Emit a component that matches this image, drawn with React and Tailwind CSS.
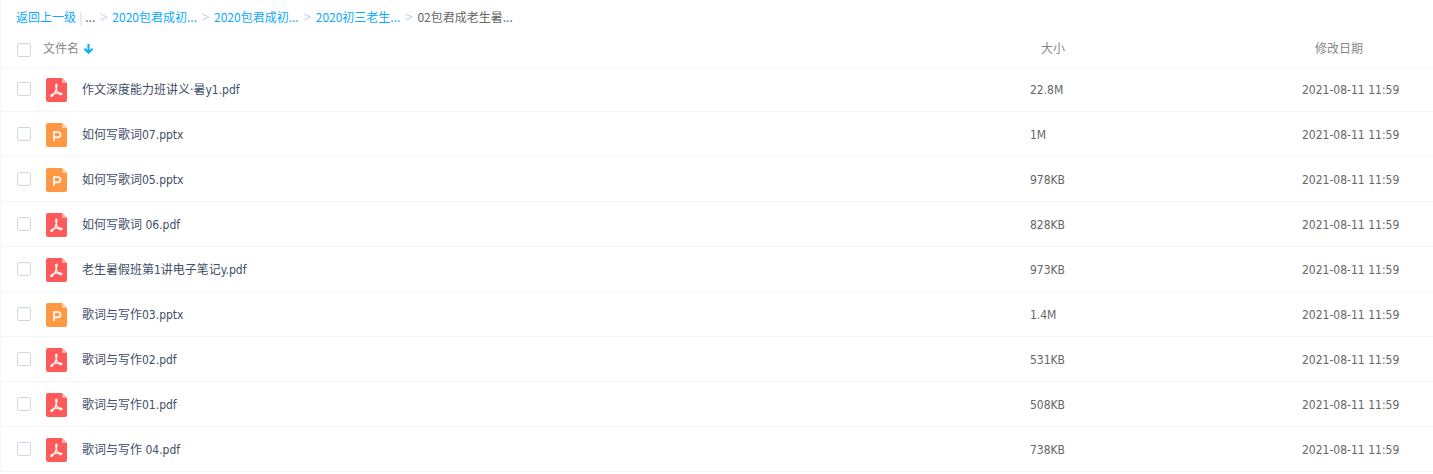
// FileList.jsx
import React from "react";

const crumbs = ["2020包君成初...", "2020包君成初...", "2020初三老生..."];

const files = [
  { name: "作文深度能力班讲义·暑y1.pdf", type: "pdf", size: "22.8M" },
  { name: "如何写歌词07.pptx", type: "ppt", size: "1M" },
  { name: "如何写歌词05.pptx", type: "ppt", size: "978KB" },
  { name: "如何写歌词 06.pdf", type: "pdf", size: "828KB" },
  { name: "老生暑假班第1讲电子笔记y.pdf", type: "pdf", size: "973KB" },
  { name: "歌词与写作03.pptx", type: "ppt", size: "1.4M" },
  { name: "歌词与写作02.pdf", type: "pdf", size: "531KB" },
  { name: "歌词与写作01.pdf", type: "pdf", size: "508KB" },
  { name: "歌词与写作 04.pdf", type: "pdf", size: "738KB" },
];

const modified = "2021-08-11 11:59";

const FileIcon = ({ type }) => {
  const isPdf = type === "pdf";
  return (
    <svg width="21" height="24" viewBox="0 0 21 24" fill="none" aria-hidden="true" className="shrink-0">
      <path
        d="M2 0h14l5 5v17a2 2 0 0 1-2 2H2a2 2 0 0 1-2-2V2a2 2 0 0 1 2-2z"
        fill={isPdf ? "#ff5959" : "#ff9743"}
      />
      <path d="M16 0l5 5h-4a1 1 0 0 1-1-1z" fill={isPdf ? "#ffacac" : "#ffcba1"} />
      {isPdf ? (
        <path
          d="M10.300 10.600c-.4-2-1-4.300 0-4.400 1.200 0 .6 2.500 0 4.400zc-.7 2.800-2.300 5.900-3.900 7.400-.9.8-2 .3-1.400-.6.900-1.400 3.500-1.900 5.300-2.200 1.800-.3 4.400-.6 5.400.2.800.700-.1 1.700-1.300 1.200-1.800-.8-3.700-3.200-4.100-6z"
          stroke="#fff"
          strokeWidth="1.200"
          strokeLinejoin="round"
        />
      ) : (
        <path d="M8 18V9h3.800a2.600 2.600 0 0 1 0 5.300H8" stroke="#fff" strokeWidth="1.700" />
      )}
    </svg>
  );
};

const Checkbox = ({ label, className }) => (
  <input
    type="checkbox"
    aria-label={label}
    className={`block size-[14px] shrink-0 appearance-none rounded-xs border border-[#d3d9e3] bg-white checked:bg-[#09aaff] ${className}`}
  />
);

const Separator = () => (
  <span className="px-1 font-['DejaVu_Sans_Condensed',sans-serif] text-[#c4d8f4]">&gt;</span>
);

const Breadcrumb = () => (
  <nav className="flex h-9 items-center pb-0.5 pl-[15px] font-['Noto_Sans_CJK_SC',sans-serif] text-[#09aaff]">
    <a href="#back">返回上一级</a>
    <span className="px-[3px] text-[#c4d8f4]">|</span>
    <span className="text-[#666]">...</span>
    {crumbs.map((crumb, i) => (
      <React.Fragment key={i}>
        <Separator />
        <a href={`#dir-${i}`}>{crumb}</a>
      </React.Fragment>
    ))}
    <Separator />
    <span className="text-[#666]">02包君成老生暑...</span>
  </nav>
);

const App = () => {
  return (
    <main className="border-l border-[#f2f6fd] bg-white font-['DejaVu_Sans_Condensed','Noto_Sans_CJK_SC',sans-serif] text-xs">
      <Breadcrumb />
      <table className="w-full table-fixed border-separate border-spacing-0 text-left">
        <colgroup>
          <col />
          <col className="w-[19%]" />
          <col className="w-[131px]" />
        </colgroup>
        <thead className="text-[#888]">
          <tr className="h-8">
            <th scope="col" className="border-b border-[#f2f6fd] p-0 pb-1.5 pl-4 font-normal">
              <div className="flex items-center">
                <Checkbox label="全选" className="mt-0.5" />
                <button type="button" className="ml-3 flex items-center gap-1">
                  文件名
                  <svg width="12" height="10" viewBox="0 0 12 10" fill="none" aria-hidden="true">
                    <path d="M5.500 0v8.500M1.500 4.700l4 4 4-4" stroke="#09aaff" strokeWidth="2" />
                  </svg>
                </button>
              </div>
            </th>
            <th scope="col" className="border-b border-[#f2f6fd] p-0 pb-1.5 pl-[11px] font-normal">
              大小
            </th>
            <th scope="col" className="border-b border-[#f2f6fd] p-0 pb-1.5 pl-[13px] font-normal">
              修改日期
            </th>
          </tr>
        </thead>
        <tbody className="text-[#666]">
          {files.map((file) => (
            <tr key={file.name} className="h-[45px] first:h-11">
              <td className="border-b border-[#f2f6fd] p-0 pt-px pl-4">
                <div className="flex items-center">
                  <Checkbox label={file.name} className="mb-0.5" />
                  <a href={`#${file.type}`} className="ml-[15px] flex items-center gap-[15px] text-[#424e67]">
                    <FileIcon type={file.type} />
                    {file.name}
                  </a>
                </div>
              </td>
              <td className="border-b border-[#f2f6fd] p-0 pt-px">{file.size}</td>
              <td className="border-b border-[#f2f6fd] p-0 pt-px">{modified}</td>
            </tr>
          ))}
        </tbody>
      </table>
    </main>
  );
};

export default App;
